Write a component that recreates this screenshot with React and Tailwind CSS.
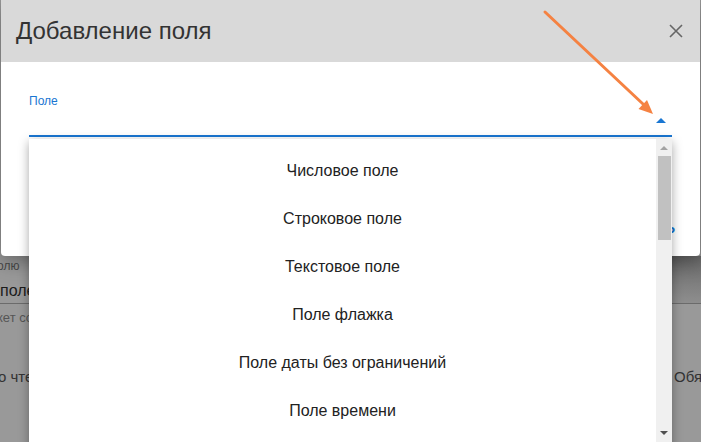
import React from "react";

const fields = [
  "Числовое поле",
  "Строковое поле",
  "Текстовое поле",
  "Поле флажка",
  "Поле даты без ограничений",
  "Поле времени",
  "Поле даты",
];

const Backdrop = () => (
  <div className="flex flex-col pt-[256px] text-[#2a2a2a]">
    <div className="flex h-[47px] justify-between">
      <div className="flex flex-col">
        <span className="-ml-[3px] mt-[3px] text-[12px] leading-[14px] text-[#4a4a4a]">
          олю
        </span>
        <span className="mt-[7px] text-[16px] leading-[22px] text-[#1c1c1c]">
          поле
        </span>
      </div>
      <div className="w-[29px] bg-gradient-to-b from-[#6a6a6a] to-[#8e8e8e]" />
    </div>
    <div className="h-px bg-[#6b6b6b]" />
    <span className="-ml-[3px] mt-[6px] text-[13px] leading-[16px] text-[#555]">
      кет со
    </span>
    <div className="mt-[41px] flex justify-between text-[15px] leading-[20px] text-[#333]">
      <span className="-ml-[2px]">о чте</span>
      <span className="-mr-[8px]">Обяз</span>
    </div>
  </div>
);

const Dialog = () => (
  <div className="absolute left-[1px] top-0 flex h-[256px] w-[699px] flex-col overflow-hidden rounded-b-[4px] bg-white shadow-[0_6px_20px_rgba(0,0,0,0.35)]">
    <div className="flex h-[62px] items-center justify-between bg-[#d9d9d9] pl-[15px] pr-[17px]">
      <h2 className="text-[24px] leading-[28px] text-[#333]">Добавление поля</h2>
      <svg width="14" height="14" viewBox="0 0 14 14" className="text-[#666]">
        <path d="M1 1L13 13M13 1L1 13" stroke="currentColor" strokeWidth="1.6" />
      </svg>
    </div>
    <div className="flex flex-col px-[28px] pt-[32px]">
      <label className="text-[12px] leading-[14px] text-[#1976d2]">Поле</label>
      <div className="flex h-[27px] items-center justify-end pr-[6px]">
        <svg width="10" height="5" viewBox="0 0 10 5" className="mb-[3px] text-[#1976d2]">
          <path d="M0 5L5 0L10 5Z" fill="currentColor" />
        </svg>
      </div>
      <div className="h-[2px] bg-[#1976d2]" />
    </div>
    <div className="mt-auto flex justify-end pb-[17px] pr-[25px]">
      <span className="text-[14px] font-bold text-[#1976d2]">ДОБАВИТЬ</span>
    </div>
  </div>
);

const FieldMenu = () => (
  <div className="absolute left-[29px] top-[139px] flex h-[320px] w-[643px] bg-white shadow-[0_3px_10px_rgba(0,0,0,0.35)]">
    <ul className="flex flex-1 flex-col pt-[8px]">
      {fields.map((f) => (
        <li
          key={f}
          className="flex h-[48px] shrink-0 items-center justify-center text-[16px] text-[#222]"
        >
          {f}
        </li>
      ))}
    </ul>
    <div className="flex w-[16px] flex-col items-center bg-[#f0f0f0]">
      <svg width="8" height="4" viewBox="0 0 8 4" className="mt-[7px] text-[#a3a3a3]">
        <path d="M0 4L4 0L8 4Z" fill="currentColor" />
      </svg>
      <div className="mt-[6px] h-[84px] w-[13px] bg-[#c1c1c1]" />
      <div className="flex-1" />
      <svg width="8" height="4" viewBox="0 0 8 4" className="mb-[24px] text-[#505050]">
        <path d="M0 0L8 0L4 4Z" fill="currentColor" />
      </svg>
    </div>
  </div>
);

export default function App() {
  return (
    <div className="relative h-[442px] w-[701px] overflow-hidden bg-[#999] font-['Liberation_Sans',Arial,sans-serif]">
      <Backdrop />
      <Dialog />
      <FieldMenu />
      <svg className="pointer-events-none absolute inset-0" width="701" height="442">
        <line x1="545" y1="12" x2="643" y2="104" stroke="#f58242" strokeWidth="3" strokeLinecap="round" />
        <polygon points="653,114 638.5,109 647,100" fill="#f58242" />
      </svg>
    </div>
  );
}
